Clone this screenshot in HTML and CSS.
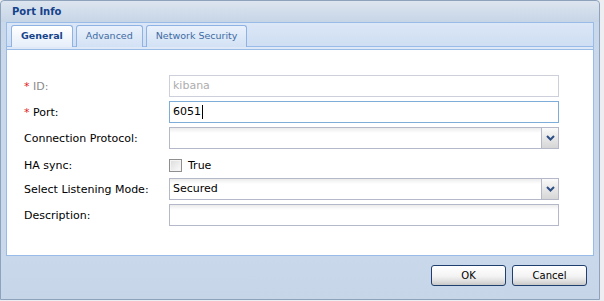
FILE: index.html
```html
<!DOCTYPE html>
<html lang="en">
<head>
  <meta charset="UTF-8" />
  <title>Port Info</title>
  <link rel="stylesheet" href="styles.css">
</head>
<body>
  <!-- Port Info window -->
  <div class="window">
    <div class="window-header">Port Info</div>

    <div class="tab-panel">
      <div class="tab-strip">
        <div class="tab active">General</div>
        <div class="tab">Advanced</div>
        <div class="tab">Network Security</div>
      </div>
      <div class="tab-spacer"></div>

      <div class="tab-body">
        <div class="form-row">
          <label class="field-label disabled"><span class="req">*</span> ID:</label>
          <div class="field disabled-field">kibana</div>
        </div>
        <div class="form-row">
          <label class="field-label"><span class="req">*</span> Port:</label>
          <div class="field focus">6051<span class="caret"></span></div>
        </div>
        <div class="form-row">
          <label class="field-label">Connection Protocol:</label>
          <div class="field combo">
            <span class="combo-text"></span>
            <span class="trigger">
              <svg width="9" height="6" viewBox="0 0 9 6"><polyline points="1,1 4.5,4.5 8,1" fill="none" stroke="#2d4f86" stroke-width="2"/></svg>
            </span>
          </div>
        </div>
        <div class="form-row check-row">
          <label class="field-label">HA sync:</label>
          <span class="checkbox"></span>
          <span class="check-label">True</span>
        </div>
        <div class="form-row">
          <label class="field-label">Select Listening Mode:</label>
          <div class="field combo">
            <span class="combo-text">Secured</span>
            <span class="trigger">
              <svg width="9" height="6" viewBox="0 0 9 6"><polyline points="1,1 4.5,4.5 8,1" fill="none" stroke="#2d4f86" stroke-width="2"/></svg>
            </span>
          </div>
        </div>
        <div class="form-row">
          <label class="field-label">Description:</label>
          <div class="field"></div>
        </div>
      </div>
    </div>

    <!-- buttons -->
    <div class="window-footer">
      <button class="btn">OK</button>
      <button class="btn">Cancel</button>
    </div>
  </div>
</body>
</html>
```

FILE: styles.css
```css
body {
  margin: 0;
  padding: 0;
  background-color: #eceef1;
  font-family: "DejaVu Sans", Verdana, sans-serif;
}

.window {
  box-sizing: border-box;
  width: 600px;
  height: 300px;
  border: 1px solid #8ea2bb;
  border-radius: 4px 4px 0 0;
  background-color: #c9d8ea;
  display: flex;
  flex-direction: column;
}

.window-header {
  height: 21px;
  line-height: 22px;
  padding-left: 11px;
  font-size: 10px;
  font-weight: bold;
  color: #15428b;
  background: linear-gradient(#dde5ef, #c6d5e7);
  border-radius: 4px 4px 0 0;
}

.tab-panel {
  margin: 0 5px;
  flex: 1;
  display: flex;
  flex-direction: column;
}

.tab-strip {
  box-sizing: border-box;
  height: 25px;
  border: 1px solid #99bbe8;
  background: linear-gradient(#dbe7f7, #cfdef2);
  display: flex;
  align-items: flex-end;
  gap: 3px;
  padding-left: 4px;
}

.tab {
  box-sizing: border-box;
  height: 22px;
  line-height: 20px;
  padding: 0 9px;
  font-size: 9.5px;
  color: #416aa3;
  border: 1px solid #8db2e3;
  border-bottom: none;
  border-radius: 3px 3px 0 0;
  background: linear-gradient(#e9f1fc, #d2e1f4);
  margin-bottom: -1px;
}

.tab.active {
  font-weight: bold;
  color: #15428b;
  background: linear-gradient(#ffffff, #e6eef9);
}

.tab-spacer {
  height: 2px;
  background-color: #dfe8f6;
  border: 1px solid #99bbe8;
  border-top: none;
}

.tab-body {
  flex: 1;
  background: #fff;
  border: 1px solid #99bbe8;
  border-top: none;
  padding: 25px 0 0 17px;
}

.form-row {
  display: flex;
  align-items: center;
  height: 22px;
  margin-bottom: 4px;
  font-size: 11px;
  color: #000;
}

.check-row {
  height: 25px;
  margin-bottom: 0;
}

.field-label {
  width: 145px;
  flex-shrink: 0;
}

.field-label.disabled {
  color: #8a8a8a;
}

.req {
  color: #e02020;
}

.field {
  box-sizing: border-box;
  width: 390px;
  height: 22px;
  line-height: 20px;
  padding-left: 3px;
  border: 1px solid #b5b8c8;
  background: linear-gradient(#ececec, #ffffff 5px);
  font-size: 11px;
  display: flex;
  align-items: center;
}

.disabled-field {
  color: #adadad;
  border-color: #cdd0da;
  background: #fff;
}

.focus {
  border-color: #7eadd9;
  background: #fff;
}

.caret {
  display: inline-block;
  width: 1px;
  height: 14px;
  background: #000;
  margin-left: 1px;
}

.combo-text {
  flex: 1;
}

.trigger {
  box-sizing: border-box;
  width: 17px;
  height: 20px;
  border-left: 1px solid #b5b8c8;
  background: linear-gradient(#fafafa, #e4e4e4 60%, #d6d6d6);
  display: flex;
  align-items: center;
  justify-content: center;
}

.checkbox {
  box-sizing: border-box;
  width: 13px;
  height: 13px;
  border: 1px solid #8f8f8f;
  background: linear-gradient(135deg, #dcdcdc, #fbfbfb);
  box-shadow: inset 0 0 0 1px #f4f4f4;
}

.check-label {
  margin-left: 6px;
}

.window-footer {
  height: 43px;
  display: flex;
  justify-content: flex-end;
  align-items: flex-start;
  gap: 6px;
  padding: 9px 12px 0 0;
  box-sizing: border-box;
  background: linear-gradient(#c9d8ea, #c6d5e8);
}

.btn {
  box-sizing: border-box;
  width: 75px;
  height: 21px;
  border: 1px solid #1f3f6e;
  border-radius: 3px;
  background: linear-gradient(#ffffff, #f3f3f3 55%, #dedede 80%, #c8c8c8);
  font-family: "DejaVu Sans", Verdana, sans-serif;
  font-size: 10px;
  color: #000;
  padding: 0;
  cursor: pointer;
}
```
